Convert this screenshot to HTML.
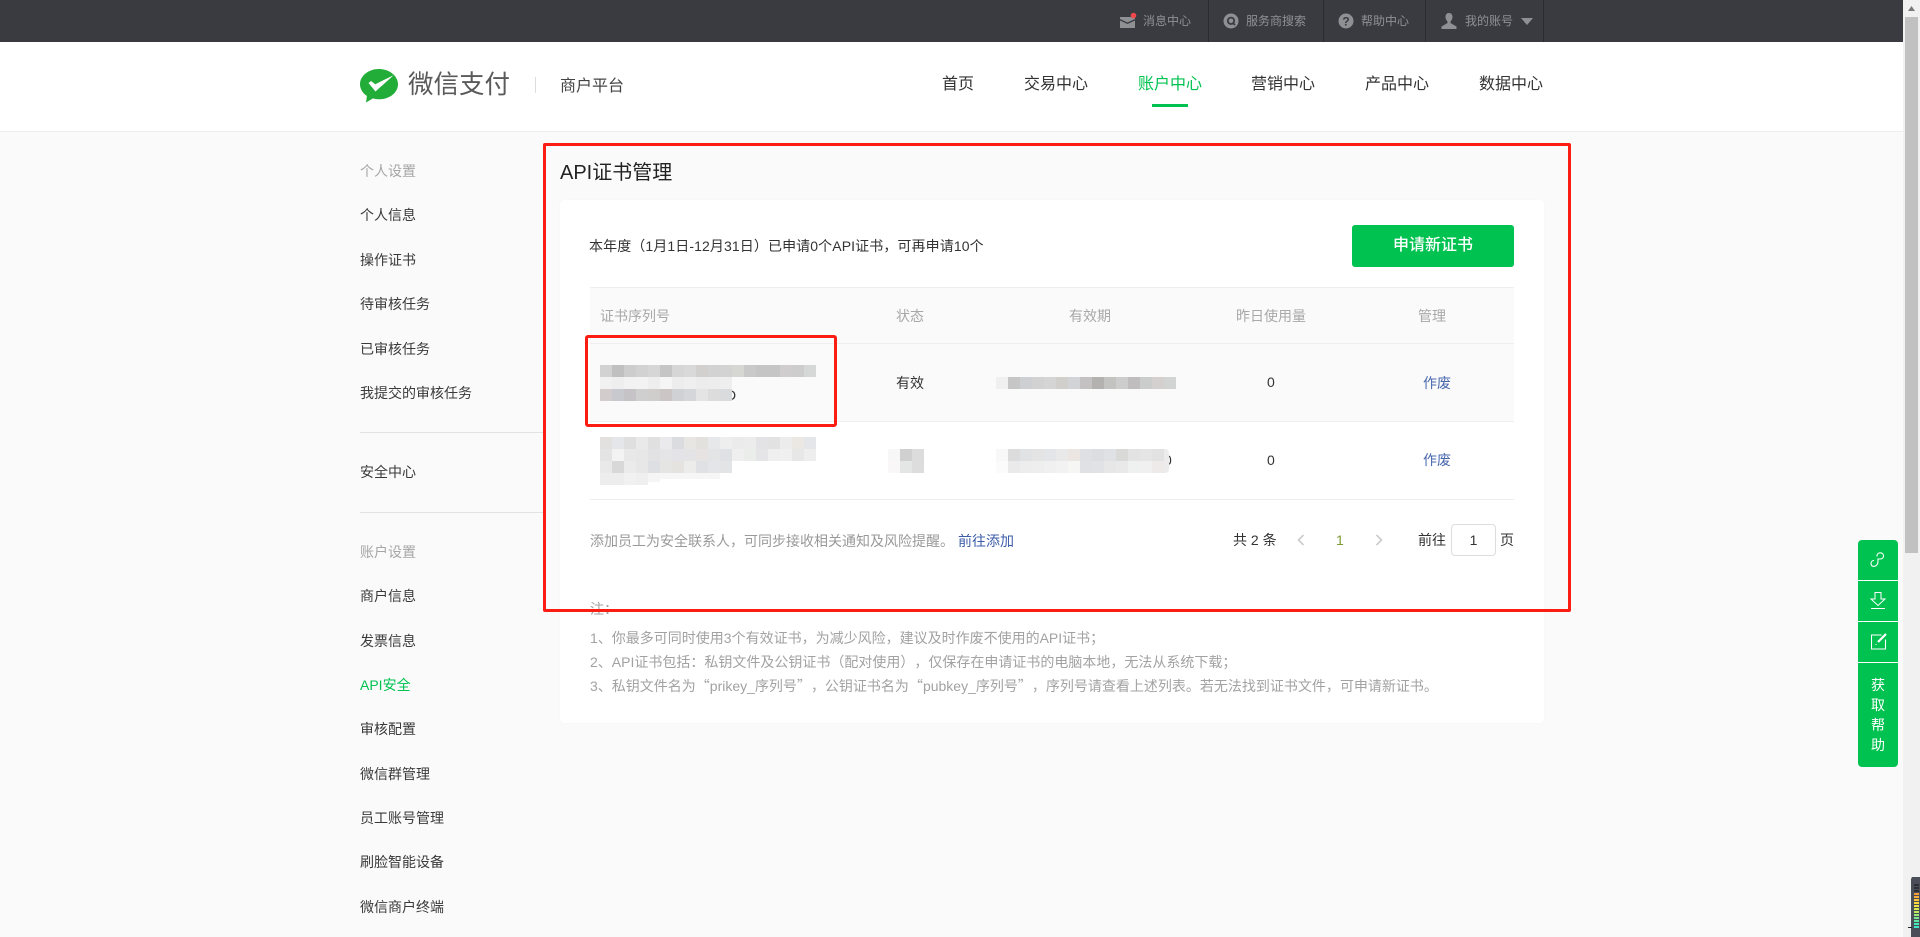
<!DOCTYPE html>
<html lang="zh-CN">
<head>
<meta charset="utf-8">
<title>API证书管理</title>
<style>
html,body{margin:0;padding:0;width:1920px;height:937px;overflow:hidden;background:#fafafa}
body{position:relative;font-family:"Liberation Sans","Noto Sans CJK SC",sans-serif;font-size:14px;color:#333;text-spacing-trim:space-all}
.a{position:absolute;display:block}
.t{position:absolute;line-height:20px;height:20px;white-space:nowrap}
.top{color:#8f9094;font-size:12px}
.sep{position:absolute;top:0;width:1px;height:42px;background:#2b2c30}
.nav{font-size:16px;color:#333;line-height:24px;height:24px}
.s{left:360px;color:#3a3a3a}
.h{left:360px;color:#a6a6a6}
.th{color:#a8a8a8}
.blue{color:#4a68ae}
.note{left:590px;color:#a2a2a2;letter-spacing:0}
.q{font-family:"Noto Sans CJK SC",sans-serif}
.g{color:#fff}
</style>
</head>
<body>
<!-- top bar -->
<div class="a" style="left:0;top:0;width:1903px;height:42px;background:#3a3b40"></div>
<svg class="a" style="left:1120px;top:12px" width="18" height="18" viewBox="0 0 18 18"><path d="M0 5h15v2L7.500 10.500 0 7z" fill="#8f9094"/><path d="M0 8.500l7.500 3.500L15 8.500V16H0z" fill="#8f9094"/><circle cx="13.500" cy="3.500" r="2.800" fill="#f0484b"/></svg>
<span class="t top" style="left:1143px;top:11px">消息中心</span>
<div class="sep" style="left:1208px"></div>
<svg class="a" style="left:1223px;top:13px" width="16" height="16" viewBox="0 0 16 16"><circle cx="8" cy="8" r="7.500" fill="#8f9094"/><circle cx="8" cy="7.800" r="3.200" fill="none" stroke="#3a3b40" stroke-width="1.800"/><path d="M10 10l2 2" stroke="#3a3b40" stroke-width="1.600"/></svg>
<span class="t top" style="left:1246px;top:11px">服务商搜索</span>
<div class="sep" style="left:1323px"></div>
<svg class="a" style="left:1338px;top:13px" width="16" height="16" viewBox="0 0 16 16"><circle cx="8" cy="8" r="7.500" fill="#8f9094"/><text x="8" y="12.500" text-anchor="middle" font-size="12" font-weight="bold" fill="#3a3b40" font-family="Liberation Sans">?</text></svg>
<span class="t top" style="left:1361px;top:11px">帮助中心</span>
<div class="sep" style="left:1425px"></div>
<svg class="a" style="left:1441px;top:13px" width="16" height="16" viewBox="0 0 16 16"><path d="M8 0c2.300 0 3.500 1.700 3.500 4 0 2-1 3.500-2 4.500V10l6 3.500V16H.5v-2.500l6-3.500V8.500c-1-1-2-2.500-2-4.500 0-2.300 1.200-4 3.500-4z" fill="#8f9094"/></svg>
<span class="t top" style="left:1465px;top:11px">我的账号</span>
<svg class="a" style="left:1521px;top:18px" width="12" height="8" viewBox="0 0 12 8"><path d="M0 0h12L6 7z" fill="#8f9094"/></svg>
<div class="sep" style="left:1543px"></div>

<!-- header -->
<div class="a" style="left:0;top:42px;width:1903px;height:89px;background:#fff;border-bottom:1px solid #eee"></div>
<svg class="a" style="left:360px;top:69px" width="38" height="34" viewBox="0 0 38 34"><path d="M19 0C8.500 0 0 6.800 0 15.200c0 4.700 2.700 8.900 6.900 11.700L6 33.500l7-4.100c1.900.6 3.900.9 6 .9 10.500 0 19-6.800 19-15.100S29.500 0 19 0z" fill="#22ac38"/><path d="M8.500 14l2.500-2 4.300 3.200L33.500 6.200C29 10.500 21 17.500 15.500 22.500z" fill="#fff"/></svg>
<span class="a" style="left:408px;top:66px;font-size:25.500px;line-height:38px;color:#5a5a5a;white-space:nowrap">微信支付</span>
<div class="a" style="left:535px;top:77px;width:1px;height:16px;background:#ddd"></div>
<span class="a" style="left:560px;top:75px;font-size:16px;line-height:24px;color:#444;white-space:nowrap">商户平台</span>
<span class="t nav" style="left:942px;top:73px">首页</span>
<span class="t nav" style="left:1024px;top:73px">交易中心</span>
<span class="t nav" style="left:1138px;top:73px;color:#00c250">账户中心</span>
<div class="a" style="left:1152px;top:104px;width:36px;height:3px;background:#00c250"></div>
<span class="t nav" style="left:1251px;top:73px">营销中心</span>
<span class="t nav" style="left:1365px;top:73px">产品中心</span>
<span class="t nav" style="left:1479px;top:73px">数据中心</span>

<!-- sidebar -->
<span class="t h" style="top:161px">个人设置</span>
<span class="t s" style="top:205px">个人信息</span>
<span class="t s" style="top:250px">操作证书</span>
<span class="t s" style="top:294px">待审核任务</span>
<span class="t s" style="top:339px">已审核任务</span>
<span class="t s" style="top:383px">我提交的审核任务</span>
<div class="a" style="left:360px;top:432px;width:184px;height:1px;background:#e2e2e2"></div>
<span class="t s" style="top:462px">安全中心</span>
<div class="a" style="left:360px;top:512px;width:184px;height:1px;background:#e2e2e2"></div>
<span class="t h" style="top:542px">账户设置</span>
<span class="t s" style="top:586px">商户信息</span>
<span class="t s" style="top:631px">发票信息</span>
<span class="t s" style="top:675px;color:#00c250">API安全</span>
<span class="t s" style="top:719px">审核配置</span>
<span class="t s" style="top:764px">微信群管理</span>
<span class="t s" style="top:808px">员工账号管理</span>
<span class="t s" style="top:852px">刷脸智能设备</span>
<span class="t s" style="top:897px">微信商户终端</span>

<!-- main -->
<span class="a" style="left:560px;top:158px;font-size:20px;line-height:30px;color:#222;white-space:nowrap">API证书管理</span>
<div class="a" style="left:560px;top:200px;width:984px;height:523px;background:#fff;border-radius:4px;box-shadow:0 0 1px rgba(0,0,0,.05)"></div>
<span class="t" style="left:589px;top:236px;font-size:14px;color:#333;letter-spacing:.1px">本年度（1月1日-12月31日）已申请0个API证书，可再申请10个</span>
<div class="a" style="left:1352px;top:225px;width:162px;height:42px;background:#00c250;border-radius:3px;color:#fff;font-size:16px;line-height:42px;text-align:center;font-weight:500">申请新证书</div>

<!-- table -->
<div class="a" style="left:590px;top:287px;width:924px;height:57px;background:#fafafa;border-top:1px solid #eee;border-bottom:1px solid #eee;box-sizing:border-box"></div>
<div class="a" style="left:590px;top:344px;width:924px;height:78px;background:#fafafa;border-bottom:1px solid #eee;box-sizing:border-box"></div>
<div class="a" style="left:590px;top:422px;width:924px;height:78px;background:#fff;border-bottom:1px solid #eee;box-sizing:border-box"></div>
<span class="t th" style="left:600px;top:306px">证书序列号</span>
<span class="t th" style="left:896px;top:306px">状态</span>
<span class="t th" style="left:1069px;top:306px">有效期</span>
<span class="t th" style="left:1236px;top:306px">昨日使用量</span>
<span class="t th" style="left:1418px;top:306px">管理</span>
<span class="t" style="left:896px;top:373px">有效</span>
<span class="t" style="left:1267px;top:372px">0</span>
<span class="t blue" style="left:1423px;top:373px">作废</span>
<span class="t" style="left:1267px;top:450px">0</span>
<span class="t blue" style="left:1423px;top:450px">作废</span>
<span class="t" style="left:1164px;top:450px">0</span>
<span class="t" style="left:726px;top:385px;color:#333">D</span>

<svg class="a" style="left:0;top:0" width="1920" height="937" viewBox="0 0 1920 937">
<rect x="1160" y="449" width="9" height="24" rx="4" fill="#ececec"/>
<g shape-rendering="crispEdges">
<rect x="600" y="365" width="12" height="12" fill="#d2d2d2"/><rect x="612" y="365" width="12" height="12" fill="#c0c0c0"/><rect x="624" y="365" width="12" height="12" fill="#cdcdcd"/><rect x="636" y="365" width="12" height="12" fill="#d2d2d2"/><rect x="648" y="365" width="12" height="12" fill="#d6d6d6"/><rect x="660" y="365" width="12" height="12" fill="#c5c5c5"/><rect x="672" y="365" width="12" height="12" fill="#d6d6d6"/><rect x="684" y="365" width="12" height="12" fill="#d9d9d9"/><rect x="696" y="365" width="12" height="12" fill="#d2d0ce"/><rect x="708" y="365" width="12" height="12" fill="#d2d2d2"/><rect x="720" y="365" width="12" height="12" fill="#d3d3d3"/><rect x="732" y="365" width="12" height="12" fill="#d6d6d2"/><rect x="744" y="365" width="12" height="12" fill="#c9c9c9"/><rect x="756" y="365" width="12" height="12" fill="#c5c5c5"/><rect x="768" y="365" width="12" height="12" fill="#c5c5c5"/><rect x="780" y="365" width="12" height="12" fill="#cfcdcd"/><rect x="792" y="365" width="12" height="12" fill="#cdcdcd"/><rect x="804" y="365" width="12" height="12" fill="#d6d8d8"/>
<rect x="600" y="377" width="12" height="12" fill="#f1f1f1"/><rect x="612" y="377" width="12" height="12" fill="#eeeeee"/><rect x="624" y="377" width="12" height="12" fill="#f2f2f2"/><rect x="636" y="377" width="12" height="12" fill="#f3f3f3"/><rect x="648" y="377" width="12" height="12" fill="#eeeeee"/><rect x="660" y="377" width="12" height="12" fill="#f5f5f5"/><rect x="672" y="377" width="12" height="12" fill="#ededed"/><rect x="684" y="377" width="12" height="12" fill="#efefef"/><rect x="696" y="377" width="12" height="12" fill="#ececec"/><rect x="708" y="377" width="12" height="12" fill="#ededed"/><rect x="720" y="377" width="12" height="12" fill="#eeeeee"/>
<rect x="600" y="389" width="12" height="12" fill="#d2cdcc"/><rect x="612" y="389" width="12" height="12" fill="#c8c9cf"/><rect x="624" y="389" width="12" height="12" fill="#c5c3c5"/><rect x="636" y="389" width="12" height="12" fill="#d0cfcf"/><rect x="648" y="389" width="12" height="12" fill="#d0cecd"/><rect x="660" y="389" width="12" height="12" fill="#cbc6c5"/><rect x="672" y="389" width="12" height="12" fill="#cfd1d4"/><rect x="684" y="389" width="12" height="12" fill="#d4d6d9"/><rect x="696" y="389" width="12" height="12" fill="#e4e4e4"/><rect x="708" y="389" width="12" height="12" fill="#dcdcdc"/><rect x="720" y="389" width="12" height="12" fill="#dadbdc"/>
<rect x="996" y="377" width="12" height="12" fill="#f0f0f0"/><rect x="1008" y="377" width="12" height="12" fill="#c6c6c6"/><rect x="1020" y="377" width="12" height="12" fill="#cdcfd2"/><rect x="1032" y="377" width="12" height="12" fill="#d2d2d2"/><rect x="1044" y="377" width="12" height="12" fill="#d5d5d5"/><rect x="1056" y="377" width="12" height="12" fill="#d0cfcc"/><rect x="1068" y="377" width="12" height="12" fill="#d2d3d6"/><rect x="1080" y="377" width="12" height="12" fill="#c3c1c1"/><rect x="1092" y="377" width="12" height="12" fill="#b3b2b0"/><rect x="1104" y="377" width="12" height="12" fill="#c3c3c1"/><rect x="1116" y="377" width="12" height="12" fill="#cdcdcd"/><rect x="1128" y="377" width="12" height="12" fill="#bfbdbd"/><rect x="1140" y="377" width="12" height="12" fill="#cbcdcd"/><rect x="1152" y="377" width="12" height="12" fill="#d4d0d0"/><rect x="1164" y="377" width="12" height="12" fill="#d2d4d4"/>
<rect x="600" y="437" width="12" height="12" fill="#e2e1e0"/><rect x="612" y="437" width="12" height="12" fill="#e4e6ea"/><rect x="624" y="437" width="12" height="12" fill="#dfdfdf"/><rect x="636" y="437" width="12" height="12" fill="#e9e9e9"/><rect x="648" y="437" width="12" height="12" fill="#e0e0e0"/><rect x="660" y="437" width="12" height="12" fill="#eaeaec"/><rect x="672" y="437" width="12" height="12" fill="#dadcdf"/><rect x="684" y="437" width="12" height="12" fill="#e8e6e3"/><rect x="696" y="437" width="12" height="12" fill="#e3e1de"/><rect x="708" y="437" width="12" height="12" fill="#e7e8ea"/><rect x="720" y="437" width="12" height="12" fill="#eeeeee"/><rect x="732" y="437" width="12" height="12" fill="#ebebeb"/><rect x="744" y="437" width="12" height="12" fill="#ececec"/><rect x="756" y="437" width="12" height="12" fill="#e3e3e5"/><rect x="768" y="437" width="12" height="12" fill="#e2e2e2"/><rect x="780" y="437" width="12" height="12" fill="#ececec"/><rect x="792" y="437" width="12" height="12" fill="#ebe8e3"/><rect x="804" y="437" width="12" height="12" fill="#e4e6ea"/>
<rect x="600" y="449" width="12" height="12" fill="#e4e4e4"/><rect x="612" y="449" width="12" height="12" fill="#f3f3f3"/><rect x="624" y="449" width="12" height="12" fill="#e8e8e8"/><rect x="636" y="449" width="12" height="12" fill="#e7e7e7"/><rect x="648" y="449" width="12" height="12" fill="#e2e2e4"/><rect x="660" y="449" width="12" height="12" fill="#e5e5e7"/><rect x="672" y="449" width="12" height="12" fill="#e4e4e8"/><rect x="684" y="449" width="12" height="12" fill="#e4e4e6"/><rect x="696" y="449" width="12" height="12" fill="#e8e3e3"/><rect x="708" y="449" width="12" height="12" fill="#e3e4e6"/><rect x="720" y="449" width="12" height="12" fill="#dfe1e4"/><rect x="732" y="449" width="12" height="12" fill="#efefef"/><rect x="744" y="449" width="12" height="12" fill="#ebedeb"/><rect x="756" y="449" width="12" height="12" fill="#e5e4e6"/><rect x="768" y="449" width="12" height="12" fill="#efefef"/><rect x="780" y="449" width="12" height="12" fill="#f0f0f0"/><rect x="792" y="449" width="12" height="12" fill="#e7e7e7"/><rect x="804" y="449" width="12" height="12" fill="#eeeeee"/>
<rect x="600" y="461" width="12" height="12" fill="#e9e9e9"/><rect x="612" y="461" width="12" height="12" fill="#d8d8d8"/><rect x="624" y="461" width="12" height="12" fill="#ebebeb"/><rect x="636" y="461" width="12" height="12" fill="#e7e7e7"/><rect x="648" y="461" width="12" height="12" fill="#dedfe3"/><rect x="660" y="461" width="12" height="12" fill="#e5e5e3"/><rect x="672" y="461" width="12" height="12" fill="#e5e3df"/><rect x="684" y="461" width="12" height="12" fill="#ececea"/><rect x="696" y="461" width="12" height="12" fill="#dfe1e4"/><rect x="708" y="461" width="12" height="12" fill="#e3e5e8"/><rect x="720" y="461" width="12" height="12" fill="#e3e4e6"/>
<rect x="600" y="473" width="12" height="12" fill="#ededed"/><rect x="612" y="473" width="12" height="12" fill="#ededed"/><rect x="624" y="473" width="12" height="12" fill="#f1f1f1"/><rect x="636" y="473" width="12" height="12" fill="#efefef"/><rect x="648" y="473" width="12" height="9" fill="#f5f5f5"/><rect x="660" y="473" width="60" height="6" fill="#f6f6f6"/>
<rect x="888" y="449" width="12" height="12" fill="#f7f7f7"/><rect x="900" y="449" width="12" height="12" fill="#d0d0d0"/><rect x="912" y="449" width="12" height="12" fill="#dcdcdc"/><rect x="888" y="461" width="12" height="12" fill="#f9f7f7"/><rect x="900" y="461" width="12" height="12" fill="#e4e6e6"/><rect x="912" y="461" width="12" height="12" fill="#dddddd"/>
<rect x="996" y="449" width="12" height="12" fill="#f8f8f8"/><rect x="1008" y="449" width="12" height="12" fill="#dcdcdc"/><rect x="1020" y="449" width="12" height="12" fill="#e1e2e4"/><rect x="1032" y="449" width="12" height="12" fill="#e4e4e4"/><rect x="1044" y="449" width="12" height="12" fill="#e4e5e8"/><rect x="1056" y="449" width="12" height="12" fill="#e9e9e9"/><rect x="1068" y="449" width="12" height="12" fill="#ebe6e2"/><rect x="1080" y="449" width="12" height="12" fill="#dfe0e4"/><rect x="1092" y="449" width="12" height="12" fill="#dbdde0"/><rect x="1104" y="449" width="12" height="12" fill="#dfe1e4"/><rect x="1116" y="449" width="12" height="12" fill="#d9d9d7"/><rect x="1128" y="449" width="12" height="12" fill="#e3e3e3"/><rect x="1140" y="449" width="12" height="12" fill="#e5e5e5"/><rect x="1152" y="449" width="12" height="12" fill="#e2e2e2"/>
<rect x="996" y="461" width="12" height="12" fill="#fbfbfb"/><rect x="1008" y="461" width="12" height="12" fill="#eaeaea"/><rect x="1020" y="461" width="12" height="12" fill="#ededed"/><rect x="1032" y="461" width="12" height="12" fill="#eeeeee"/><rect x="1044" y="461" width="12" height="12" fill="#f0f0f0"/><rect x="1056" y="461" width="12" height="12" fill="#f2f2f2"/><rect x="1068" y="461" width="12" height="12" fill="#f6f6f4"/><rect x="1080" y="461" width="12" height="12" fill="#dfe1e4"/><rect x="1092" y="461" width="12" height="12" fill="#e0e2e5"/><rect x="1104" y="461" width="12" height="12" fill="#e7e7e7"/><rect x="1116" y="461" width="12" height="12" fill="#e9e9e9"/><rect x="1128" y="461" width="12" height="12" fill="#eff0f0"/><rect x="1140" y="461" width="12" height="12" fill="#f0f0f0"/><rect x="1152" y="461" width="12" height="12" fill="#eeeaea"/>
</g>
</svg>

<!-- table footer -->
<span class="t" style="left:590px;top:531px;color:#999">添加员工为安全联系人，可同步接收相关通知及风险提醒。</span>
<span class="t" style="left:958px;top:531px;color:#3d5da8">前往添加</span>
<span class="t" style="left:1233px;top:530px">共 2 条</span>
<svg class="a" style="left:1297px;top:534px" width="8" height="12" viewBox="0 0 8 12"><path d="M6.500 1L1.500 6l5 5" fill="none" stroke="#ccc" stroke-width="1.600"/></svg>
<span class="t" style="left:1336px;top:530px;color:#7c9a32">1</span>
<svg class="a" style="left:1375px;top:534px" width="8" height="12" viewBox="0 0 8 12"><path d="M1.500 1l5 5-5 5" fill="none" stroke="#ccc" stroke-width="1.600"/></svg>
<span class="t" style="left:1418px;top:530px">前往</span>
<div class="a" style="left:1451px;top:524px;width:45px;height:32px;box-sizing:border-box;border:1px solid #ddd;border-radius:4px;background:#fff;text-align:center;line-height:30px">1</div>
<span class="t" style="left:1500px;top:530px">页</span>

<!-- notes -->
<span class="t note" style="top:599px">注：</span>
<span class="t note" style="top:628px">1、你最多可同时使用3个有效证书，为减少风险，建议及时作废不使用的API证书；</span>
<span class="t note" style="top:652px">2、API证书包括：私钥文件及公钥证书（配对使用），仅保存在申请证书的电脑本地，无法从系统下载；</span>
<span class="t note" style="top:676px">3、私钥文件名为<span class="q">“</span>prikey_序列号<span class="q">”</span>，公钥证书名为<span class="q">“</span>pubkey_序列号<span class="q">”</span>，序列号请查看上述列表。若无法找到证书文件，可申请新证书。</span>

<!-- red annotations -->
<div class="a" style="left:543px;top:143px;width:1028px;height:469px;box-sizing:border-box;border:3px solid #fb1c12;border-radius:2px"></div>
<div class="a" style="left:585px;top:335px;width:252px;height:92px;box-sizing:border-box;border:3px solid #fb1c12;border-radius:3px"></div>

<!-- floating help -->
<div class="a" style="left:1858px;top:540px;width:40px;height:227px;background:#00c250;border-radius:4px"></div>
<div class="a" style="left:1858px;top:580px;width:40px;height:1px;background:#fff"></div>
<div class="a" style="left:1858px;top:621px;width:40px;height:1px;background:#fff"></div>
<div class="a" style="left:1858px;top:662px;width:40px;height:1px;background:#fff"></div>
<svg class="a" style="left:1870px;top:552px" width="16" height="16" viewBox="0 0 16 16"><path d="M7 4.500V3.800C7 2 8.500.8 10.300.8c2 0 3.200 1.400 3.200 3.100 0 1.800-1.300 3.100-3.200 3.100H8v2.600c0 2.200-1.600 4.800-4 4.800-1.900 0-3-1.200-3-2.900 0-1.700 1.200-3 3-3" fill="none" stroke="#fff" stroke-width="1.100"/></svg>
<svg class="a" style="left:1870px;top:592px" width="16" height="18" viewBox="0 0 16 18"><path d="M5 .5h6v6.500h4L8 13.500 1 7h4z" fill="none" stroke="#fff" stroke-width="1"/><path d="M1 16.500h14" stroke="#fff" stroke-width="1"/></svg>
<svg class="a" style="left:1871px;top:633px" width="16" height="17" viewBox="0 0 16 17"><path d="M10.500 2H.5v14h14V6.500" fill="none" stroke="#fff" stroke-width="1.100"/><path d="M15 1L7 9" stroke="#fff" stroke-width="2.200"/><path d="M4.500 11h1v1h-1z" fill="#fff"/></svg>
<span class="a g" style="left:1858px;width:40px;text-align:center;top:675px;line-height:20px">获</span>
<span class="a g" style="left:1858px;width:40px;text-align:center;top:695px;line-height:20px">取</span>
<span class="a g" style="left:1858px;width:40px;text-align:center;top:715px;line-height:20px">帮</span>
<span class="a g" style="left:1858px;width:40px;text-align:center;top:735px;line-height:20px">助</span>

<!-- scrollbar -->
<div class="a" style="left:1903px;top:0;width:17px;height:937px;background:#f1f1f1"></div>
<svg class="a" style="left:1903px;top:0" width="17" height="17" viewBox="0 0 17 17"><path d="M8.500 6L5 11h7z" fill="#7a7a7a"/></svg>
<div class="a" style="left:1905px;top:17px;width:13px;height:536px;background:#c1c1c1"></div>

<!-- bottom right widget -->
<svg class="a" style="left:1906px;top:877px" width="14" height="60" viewBox="0 0 14 60" shape-rendering="crispEdges">
<path d="M6 0h8v60H5V2z" fill="#4a4e58"/>
<rect x="2" y="50" width="4" height="1" fill="#222"/>
<g>
<rect x="8" y="7" width="5" height="2" fill="#2c2f36"/><rect x="8" y="10" width="5" height="2" fill="#2c2f36"/><rect x="8" y="13" width="5" height="2" fill="#2c2f36"/>
<rect x="8" y="16" width="5" height="2" fill="#ff9a3c"/><rect x="8" y="19" width="5" height="2" fill="#ffb03a"/><rect x="8" y="22" width="5" height="2" fill="#ffc63a"/><rect x="8" y="25" width="5" height="2" fill="#ffd83c"/><rect x="8" y="28" width="5" height="2" fill="#f0e040"/><rect x="8" y="31" width="5" height="2" fill="#d8e84a"/><rect x="8" y="34" width="5" height="2" fill="#bde85c"/><rect x="8" y="37" width="5" height="2" fill="#9ee874"/><rect x="8" y="40" width="5" height="2" fill="#7ee88e"/><rect x="8" y="43" width="5" height="2" fill="#5ee8a4"/><rect x="8" y="46" width="5" height="2" fill="#48e8b8"/><rect x="8" y="49" width="5" height="2" fill="#3ce8c8"/>
</g>
</svg>
</body>
</html>
